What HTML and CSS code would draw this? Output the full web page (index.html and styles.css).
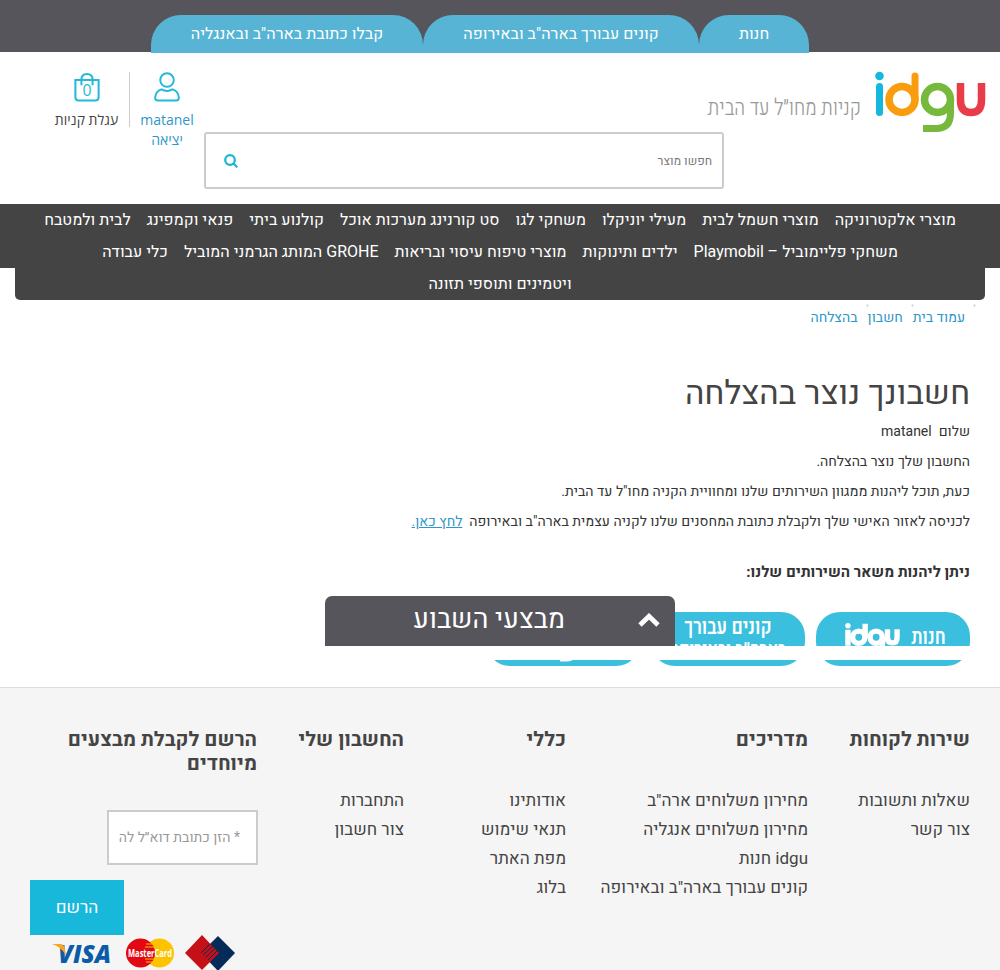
FILE: index.html
```html
<!DOCTYPE html>
<html lang="he" dir="rtl">
<head>
<meta charset="utf-8">
<title>idgu</title>
<link rel="stylesheet" href="styles.css">
</head>
<body>
<header>
  <div class="topbar">
    <a class="tab tab-shop"><span>חנות</span></a>
    <a class="tab tab-buy"><span>קונים עבורך בארה"ב ובאירופה</span></a>
    <a class="tab tab-address"><span>קבלו כתובת בארה"ב ובאנגליה</span></a>
  </div>
  <div class="masthead">
    <svg class="logo" viewBox="0 0 112 62" fill="none">
      <circle cx="5.500" cy="5" r="4.300" fill="#13b8dc"/>
      <path d="M5.500 15.500V41.500" stroke="#13b8dc" stroke-width="7" stroke-linecap="round"/>
      <path d="M41 5V28" stroke="#f99d0f" stroke-width="7" stroke-linecap="round"/>
      <circle cx="28" cy="28.500" r="13" stroke="#f99d0f" stroke-width="7.500"/>
      <path d="M76.500 28V42Q76.500 57.500 62 57.500H49" stroke="#76b93d" stroke-width="7"/>
      <circle cx="63.500" cy="28.500" r="13" stroke="#76b93d" stroke-width="7.500"/>
      <path d="M86.500 12V29Q86.500 41.500 97 41.500Q107.500 41.500 107.500 29V12" stroke="#ea3b48" stroke-width="7.500"/>
    </svg>
    <span class="slogan">קניות מחו״ל עד הבית</span>
    <div class="search">
      <span class="search-hint">חפשו מוצר</span>
      <svg class="search-icon" viewBox="0 0 14 14" fill="none" stroke="#18b4d8" stroke-width="2.200"><circle cx="6" cy="6" r="4.800"/><path d="M9.300 9.300L13.300 13.300"/></svg>
    </div>
    <div class="account">
      <svg viewBox="0 0 28 32" fill="none" stroke="#25b9d9" stroke-width="2.100"><circle cx="14" cy="8.500" r="7.300"/><path d="M8 18.500Q14 22 20 18.500Q26 20 26.800 27.500Q26.800 30.500 24 30.500H4Q1.200 30.500 1.200 27.500Q2 20 8 18.500Z"/></svg>
      <a>matanel</a>
      <a>יציאה</a>
    </div>
    <div class="cart">
      <svg viewBox="0 0 28 32" fill="none" stroke="#25b9d9" stroke-width="2.200"><path d="M1.500 8.500H26.500V27Q26.500 30.500 23 30.500H5Q1.500 30.500 1.500 27Z"/><path d="M8 14V8Q8 2 14 2Q20 2 20 8V14"/><text class="count" x="14" y="26">0</text></svg>
      <a>עגלת קניות</a>
    </div>
  </div>
  <nav class="nav">
    <div class="nav-row">
      <a>מוצרי אלקטרוניקה</a><a>מוצרי חשמל לבית</a><a>מעילי יוניקלו</a><a>משחקי לגו</a><a>סט קורנינג מערכות אוכל</a><a>קולנוע ביתי</a><a>פנאי וקמפינג</a><a>לבית ולמטבח</a>
    </div>
    <div class="nav-row">
      <a>משחקי פליימוביל – Playmobil</a><a>ילדים ותינוקות</a><a>מוצרי טיפוח עיסוי ובריאות</a><a>GROHE המותג הגרמני המוביל</a><a>כלי עבודה</a>
    </div>
    <div class="nav-row nav-last"><a>ויטמינים ותוספי תזונה</a></div>
  </nav>
</header>
<main>
  <div class="crumbs"><a>עמוד בית</a><a>חשבון</a><a>בהצלחה</a></div>
  <h1><span>חשבונך נוצר בהצלחה</span></h1>
  <p>שלום &nbsp;matanel</p>
  <p>החשבון שלך נוצר בהצלחה.</p>
  <p>כעת, תוכל ליהנות ממגוון השירותים שלנו ומחוויית הקניה מחו"ל עד הבית.</p>
  <p>לכניסה לאזור האישי שלך ולקבלת כתובת המחסנים שלנו לקניה עצמית בארה"ב ובאירופה &nbsp;<a class="here">לחץ כאן.</a></p>
  <h2>ניתן ליהנות משאר השירותים שלנו:</h2>
  <div class="services">
    <a class="service service-shop">
      <span>חנות</span>
      <svg class="service-logo" viewBox="0 0 112 62" fill="none" stroke="#fff" stroke-width="11"><circle cx="6" cy="5" r="5.500" fill="#fff" stroke="none"/><path d="M6 13V46M41 1V28M76.500 28V42Q76.500 56 62 56H49M86.500 12V29Q86.500 40 97 40Q106 40 106 29V12"/><circle cx="28" cy="28.500" r="12.500"/><circle cx="63.500" cy="28.500" r="12.500"/></svg>
    </a>
    <a class="service service-buy"><span>קונים עבורך<br><small>בארה״ב ובאירופה</small></span></a>
    <a class="service service-address">
      <svg class="service-logo" viewBox="0 0 112 62" fill="none" stroke="#fff" stroke-width="11"><circle cx="6" cy="5" r="5.500" fill="#fff" stroke="none"/><path d="M6 13V46M41 1V28M76.500 28V42Q76.500 56 62 56H49M86.500 12V29Q86.500 40 97 40Q106 40 106 29V12"/><circle cx="28" cy="28.500" r="12.500"/><circle cx="63.500" cy="28.500" r="12.500"/></svg>
    </a>
  </div>
</main>
<aside class="deals">
  <div class="deals-tab"><svg viewBox="0 0 22 14" fill="none" stroke="#fff" stroke-width="4.800"><path d="M2 12L11 3.300L20 12"/></svg><span>מבצעי השבוע</span></div>
</aside>
<footer>
  <section><h3>שירות לקוחות</h3><a>שאלות ותשובות</a><a>צור קשר</a></section>
  <section><h3>מדריכים</h3><a>מחירון משלוחים ארה"ב</a><a>מחירון משלוחים אנגליה</a><a><bdi>idgu</bdi> חנות</a><a>קונים עבורך בארה"ב ובאירופה</a></section>
  <section><h3>כללי</h3><a>אודותינו</a><a>תנאי שימוש</a><a>מפת האתר</a><a>בלוג</a></section>
  <section><h3>החשבון שלי</h3><a>התחברות</a><a>צור חשבון</a></section>
  <section class="signup">
    <h3>הרשם לקבלת מבצעים<br>מיוחדים</h3>
    <div class="email"><span>* הזן כתובת דוא״ל לה</span></div>
    <div class="submit">הרשם</div>
    <div class="cards">
      <svg class="card-isracard" viewBox="0 0 50 36"><path d="M33 1L50 18L33 36L16 18Z" fill="#062b59"/><path d="M17 0L34 18L17 35L0 18Z" fill="#c51018"/><path d="M16 18L25 9M18 20L28 11M20.500 22.500L30 13.500M23 25L32 16" stroke="#062b59"/></svg>
      <svg class="card-mastercard" viewBox="0 0 48 30"><circle cx="33.500" cy="15" r="14.500" fill="#fdc300"/><circle cx="14.500" cy="15" r="14.500" fill="#e30613"/><path d="M20 6H28M19 9H29M19 21H29M20 24H28" stroke="#fdc300"/><text class="mc" x="2" y="19" textLength="44" lengthAdjust="spacingAndGlyphs">MasterCard</text></svg>
      <svg class="card-visa" viewBox="0 0 60 22"><text class="visa" x="6" y="20" textLength="53" lengthAdjust="spacingAndGlyphs">VISA</text><path d="M0 1H9Q12 1 13 7L14 12Q9 4 0 1Z" fill="#f7a823"/></svg>
    </div>
  </section>
</footer>
</body>
</html>
```
FILE: styles.css
```css
* { box-sizing: border-box; }
body {
  margin: 0;
  height: 970px;
  overflow: hidden;
  position: relative;
  background: #fff;
  color: #333;
  font-family: Heebo, Roboto, "Open Sans", "Noto Sans", sans-serif;
  font-size: 14px;
}
a { white-space: nowrap; }
.topbar { height: 52px; background: #56555b; display: flex; padding: 15px 191px 0 0; }
.tab {
  height: 38px;
  display: flex;
  justify-content: center;
  background: #57b4d4;
  border-radius: 30px 30px 0 0;
  color: #fff;
  font-size: 16px;
  line-height: 38px;
}
.tab-shop { width: 110px; }
.tab-buy { width: 276px; }
.tab-address { width: 272px; }
.masthead { height: 152px; display: flex; align-items: flex-start; padding: 20px 14px 0 0; }
.logo { width: 112px; height: 62px; margin-top: -1px; flex: none; }
.slogan {
  width: 155px;
  margin: 22px 13px 0 -18px;
  flex: none;
  font-size: 23px;
  line-height: 28px;
  color: #999;
  font-weight: 300;
  white-space: nowrap;
  transform: scaleX(.81);
  transform-origin: right;
}
.search {
  width: 520px; height: 57px; margin: 60px 0 0;
  border: 2px solid #ccc; border-radius: 3px;
  display: flex; justify-content: space-between; align-items: center;
  padding: 0 10px 0 18px; flex: none;
}
.search-hint { font-size: 12px; color: #777; }
.search-icon { width: 14px; height: 14px; }
.account, .cart {
  display: flex; flex-direction: column; align-items: center; flex: none;
  line-height: 20px; font-size: 14px; font-family: "Open Sans", Heebo, sans-serif;
}
.account { width: 74px; color: #2e97ca; }
.cart { width: 86px; height: 55px; border-right: 1px solid #ccc; color: #444; }
.account svg, .cart svg { width: 26px; height: 30px; margin-bottom: 8px; flex: none; }
.count { font: 400 17px "Open Sans", sans-serif; fill: #25b9d9; stroke: none; text-anchor: middle; }
.nav { height: 96px; color: #fff; font-size: 16px; line-height: 32px; }
.nav-row { height: 32px; background: #444; display: flex; justify-content: center; gap: 16px; }
.nav-last { margin: 0 15px; border-radius: 0 0 5px 5px; }
main { padding: 8px 30px 0; height: 387px; }
.crumbs { display: flex; gap: 10px; padding-right: 5px; line-height: 20px; color: #2e97ca; }
.crumbs a { position: relative; }
.crumbs a::before {
  content: "";
  position: absolute;
  right: -11px;
  top: -4px;
  width: 3px;
  height: 3px;
  background: linear-gradient(#ddd, #ddd) 1px 0 / 1px 3px no-repeat, linear-gradient(#ddd, #ddd) 0 1px / 3px 1px no-repeat;
}
h1 { margin: 44px 0 6px; font-size: 33px; line-height: 44px; font-weight: 400; color: #444; }
main p { margin: 0 0 10px; line-height: 20px; white-space: nowrap; }
.here { color: #2e97ca; text-decoration: underline; }
h2 { margin: 29px 0; font-size: 15px; line-height: 22px; }
.services { display: flex; gap: 11px; }
.service {
  width: 154px; height: 54px; border-radius: 24px; background: #3bbfdf; color: #fff;
  display: flex; justify-content: center; text-align: center;
  font-size: 22px; line-height: 22px; font-weight: 600;
}
.service span { transform: scaleX(.79); }
.service small { font-size: 20px; }
.service-buy { padding-top: 4px; }
.service-shop { justify-content: flex-start; gap: 7px; padding: 14px 20px 0 0; }
.service-logo { width: 55px; height: 31px; margin-top: -3px; }
.service-address .service-logo { margin-top: 19px; }
.deals { position: absolute; left: 0; right: 0; top: 596px; height: 64px; border-bottom: 14px solid #fff; }
.deals-tab {
  width: 350px; height: 50px; margin: 0 auto;
  display: flex; gap: 73px; padding: 0 15px;
  background: #56555b; color: #fff; border-radius: 7px 7px 0 0;
  font-size: 27px; line-height: 48px; white-space: nowrap;
}
.deals-tab svg { width: 22px; height: 14px; margin-top: 17px; flex: none; }
footer {
  height: 283px; border-top: 1px solid #ddd; background: #f5f5f5; color: #444;
  display: grid; grid-template-columns: 162px 242px 162px 147px 227px; padding: 40px 30px 0;
}
footer section { display: flex; flex-direction: column; align-items: flex-start; }
h3 { margin: 0 0 34px; font-size: 20px; line-height: 24px; white-space: nowrap; }
footer a { font-size: 17px; line-height: 29px; }
.email {
  width: 151px; height: 55px; margin-right: -1px; padding-right: 16px;
  display: flex; align-items: center;
  background: #fff; border: 2px solid #ccc; color: #999; white-space: nowrap;
}
.submit {
  width: 94px; height: 55px; margin-top: 15px; flex: none;
  display: flex; align-items: center; justify-content: center;
  background: #18b8da; color: #fff; font-size: 17px; align-self: flex-end;
}
.cards { display: flex; padding-right: 22px; }
.cards svg { direction: ltr; flex: none; overflow: visible; }
.card-isracard { width: 50px; height: 36px; }
.card-mastercard { width: 48px; height: 30px; margin: 3px 11px 0 14px; }
.card-visa { width: 60px; height: 22px; margin-top: 8px; }
.mc { font: bold 10px "Open Sans", sans-serif; fill: #fff; }
.visa { font: italic 800 25px "Open Sans", sans-serif; fill: #0b5ca8; }
```
